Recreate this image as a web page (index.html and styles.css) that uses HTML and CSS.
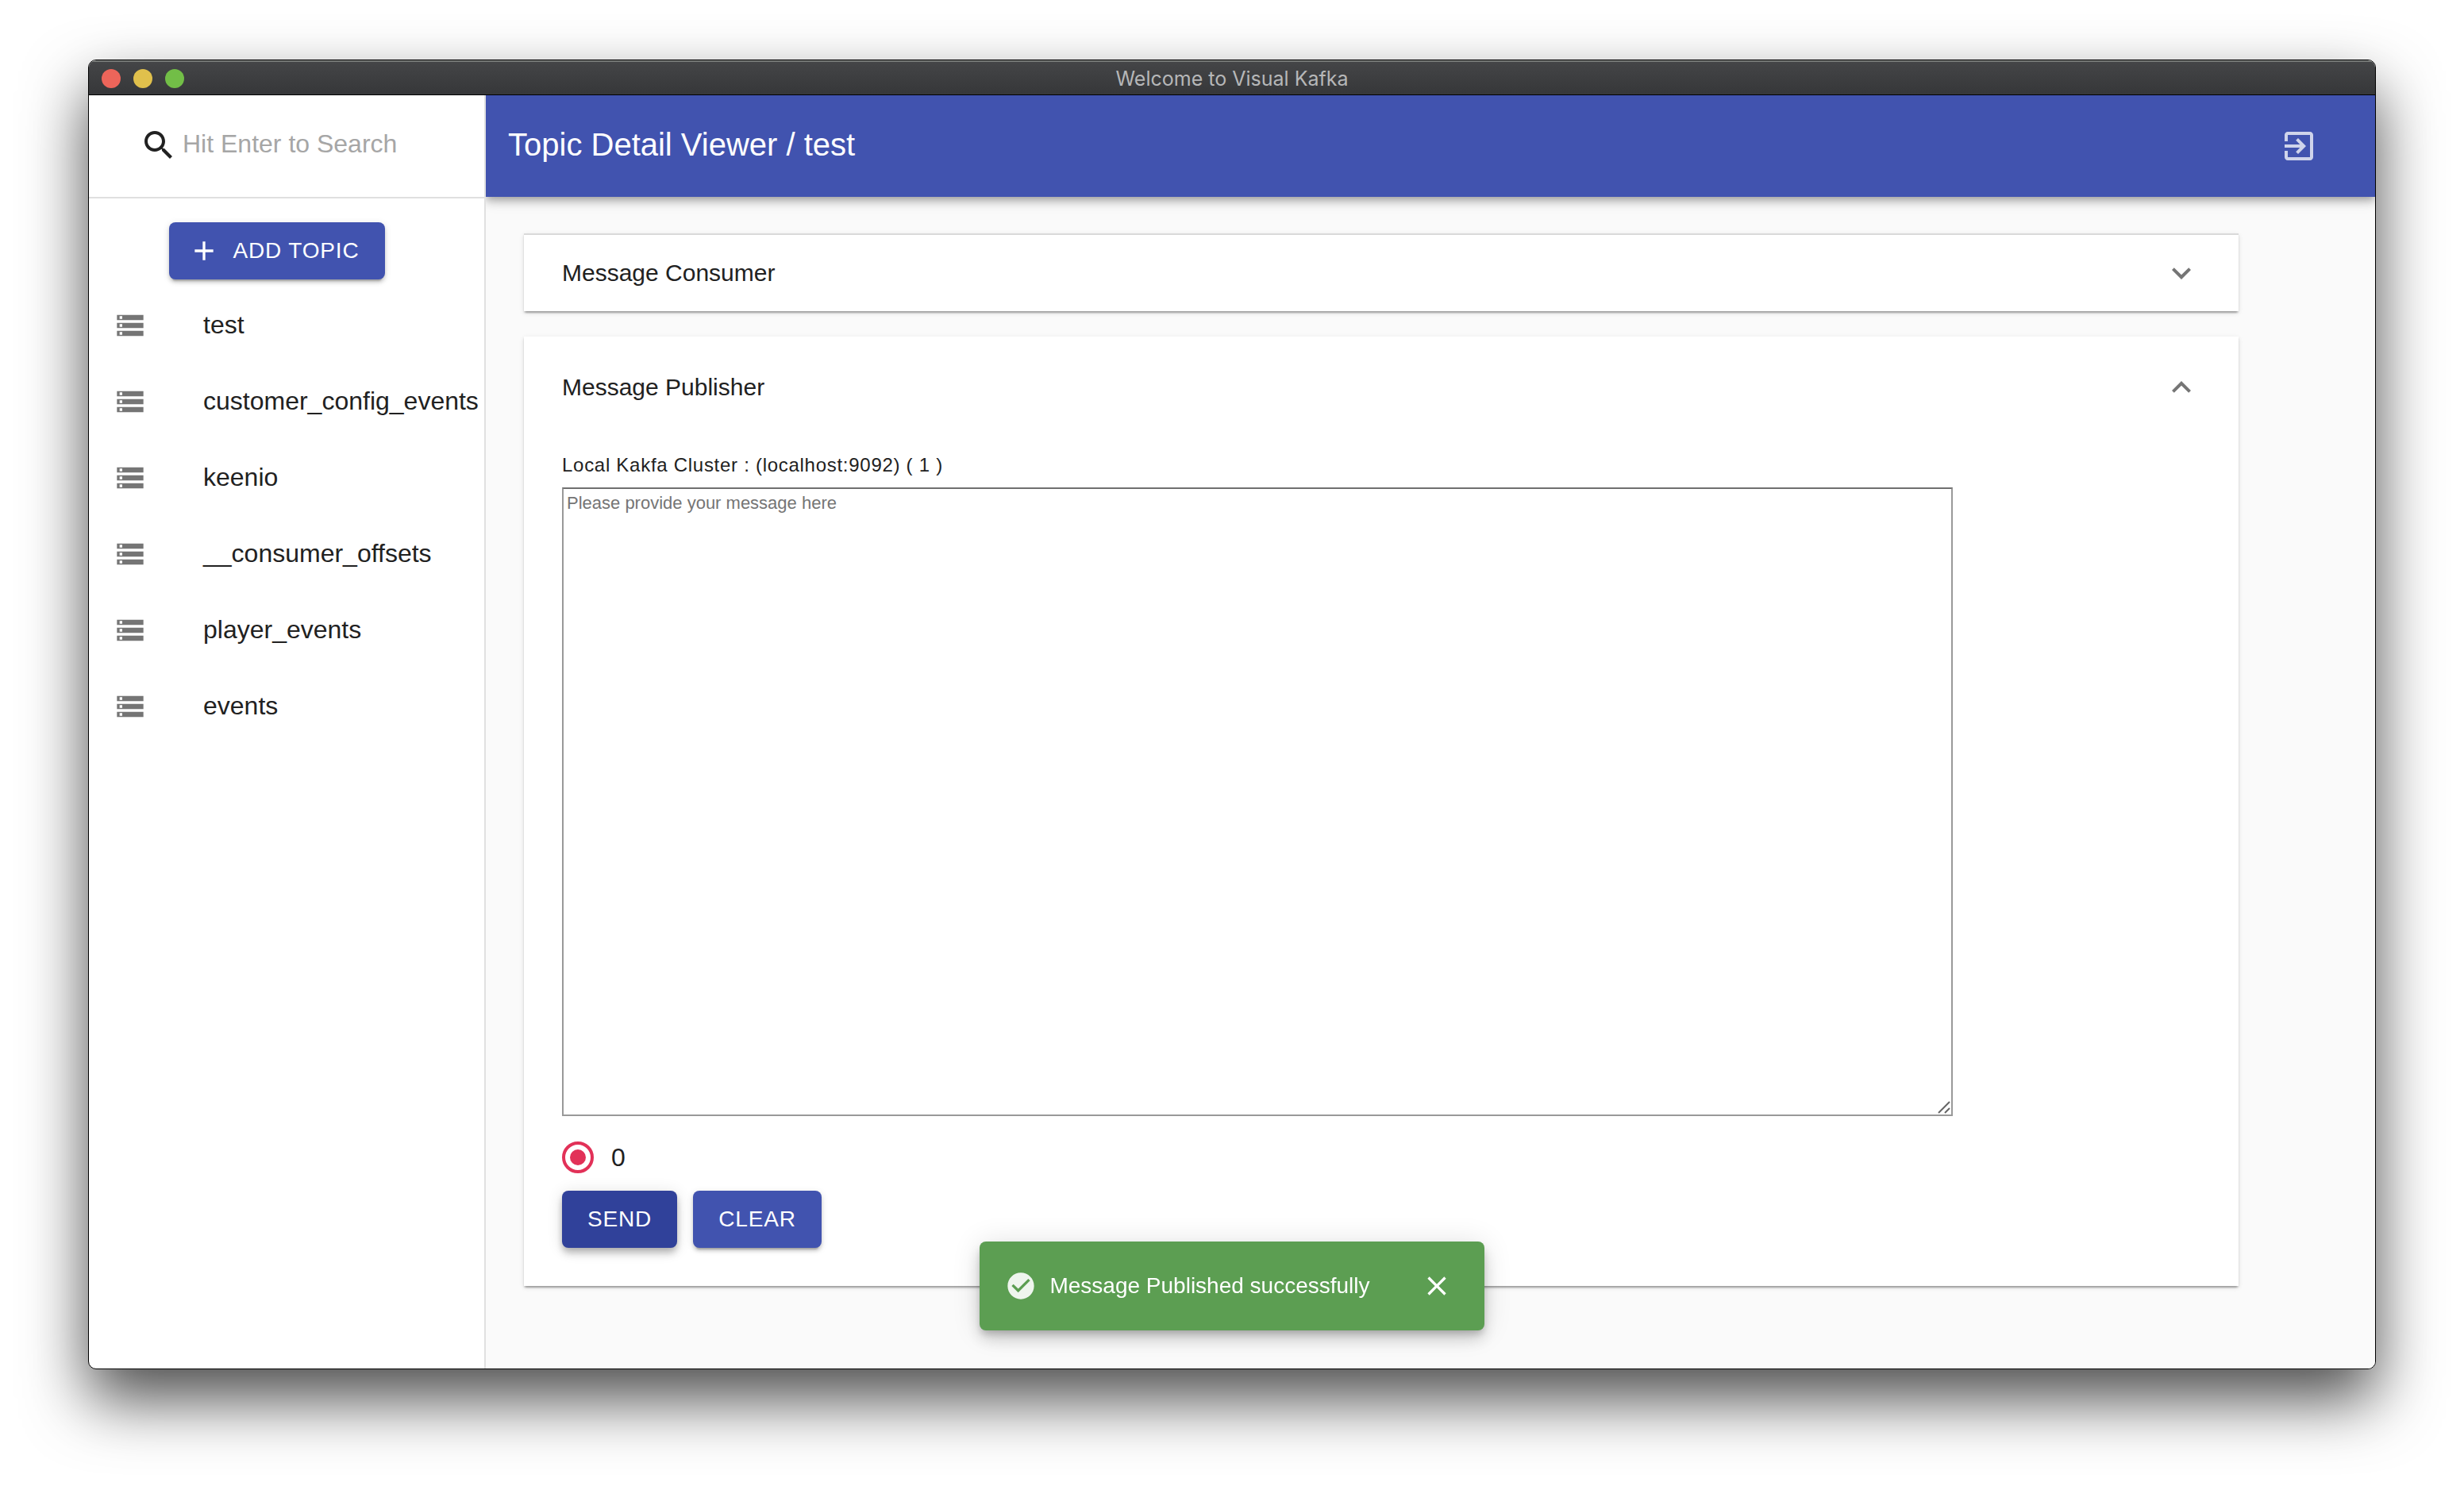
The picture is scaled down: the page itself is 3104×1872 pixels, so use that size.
FILE: index.html
```html
<!DOCTYPE html>
<html lang="en">
<head>
<meta charset="utf-8">
<title>Welcome to Visual Kafka</title>
<link rel="stylesheet" href="styles.css">
</head>
<body>
<svg class="sprite" aria-hidden="true">
  <symbol id="storage" viewBox="0 0 24 24"><path d="M2 20h20v-4H2v4zm2-3h2v2H4v-2zM2 4v4h20V4H2zm4 3H4V5h2v2zm-4 7h20v-4H2v4zm2-3h2v2H4v-2z"/></symbol>
  <symbol id="expand" viewBox="0 0 24 24"><path d="M16.59 8.59L12 13.17 7.41 8.59 6 10l6 6 6-6z"/></symbol>
</svg>
<div class="window">
  <header class="titlebar">
    <div class="lights">
      <button class="light light-close" type="button" aria-label="Close window"></button>
      <button class="light light-min" type="button" aria-label="Minimize window"></button>
      <button class="light light-max" type="button" aria-label="Zoom window"></button>
    </div>
    <span class="window-title">Welcome to Visual Kafka</span>
  </header>
  <div class="body">
    <aside class="sidebar">
      <label class="search">
        <svg class="icon" viewBox="0 0 24 24" aria-hidden="true"><path d="M15.5 14h-.79l-.28-.27C15.41 12.59 16 11.11 16 9.5 16 5.91 13.09 3 9.5 3S3 5.91 3 9.5 5.91 16 9.5 16c1.61 0 3.09-.59 4.23-1.57l.27.28v.79l5 4.99L20.49 19l-4.99-5zm-6 0C7.01 14 5 11.99 5 9.5S7.01 5 9.5 5 14 7.01 14 9.5 11.99 14 9.5 14z"/></svg>
        <input class="search-input" type="text" placeholder="Hit Enter to Search" aria-label="Search topics">
      </label>
      <button class="btn add-topic" type="button">
        <svg class="icon-small" viewBox="0 0 24 24" aria-hidden="true"><path d="M19 13h-6v6h-2v-6H5v-2h6V5h2v6h6v2z"/></svg>
        ADD TOPIC
      </button>
      <nav class="topics">
        <a class="topic" href="#test"><svg class="icon-small"><use href="#storage"/></svg><span class="topic-name">test</span></a>
        <a class="topic" href="#customer_config_events"><svg class="icon-small"><use href="#storage"/></svg><span class="topic-name">customer_config_events</span></a>
        <a class="topic" href="#keenio"><svg class="icon-small"><use href="#storage"/></svg><span class="topic-name">keenio</span></a>
        <a class="topic" href="#__consumer_offsets"><svg class="icon-small"><use href="#storage"/></svg><span class="topic-name">__consumer_offsets</span></a>
        <a class="topic" href="#player_events"><svg class="icon-small"><use href="#storage"/></svg><span class="topic-name">player_events</span></a>
        <a class="topic" href="#events"><svg class="icon-small"><use href="#storage"/></svg><span class="topic-name">events</span></a>
      </nav>
    </aside>
    <main class="main">
      <div class="appbar">
        <h1 class="appbar-title">Topic Detail Viewer / test</h1>
        <button class="icon-btn exit" type="button" aria-label="Exit">
          <svg class="icon" viewBox="0 0 24 24"><path d="M10.09 15.59L11.5 17l5-5-5-5-1.41 1.41L12.67 11H3v2h9.67l-2.58 2.59zM19 3H5c-1.11 0-2 .9-2 2v4h2V5h14v14H5v-4H3v4c0 1.1.89 2 2 2h14c1.1 0 2-.9 2-2V5c0-1.1-.9-2-2-2z"/></svg>
        </button>
      </div>
      <div class="panels">
        <section class="panel panel-collapsed">
          <button class="panel-head" type="button" aria-expanded="false">
            Message Consumer
            <svg class="icon chevron"><use href="#expand"/></svg>
          </button>
        </section>
        <section class="panel">
          <button class="panel-head panel-head-open" type="button" aria-expanded="true">
            Message Publisher
            <svg class="icon chevron chevron-up"><use href="#expand"/></svg>
          </button>
          <form class="publisher">
            <label class="cluster" for="message">Local Kakfa Cluster : (localhost:9092) ( 1 )</label>
            <div class="message-box">
              <textarea class="message" id="message" placeholder="Please provide your message here"></textarea>
              <svg class="grip" viewBox="0 0 18 18" aria-hidden="true"><path d="M2 16L16 2M10 16l6-6"/></svg>
            </div>
            <label class="partition"><input class="radio" type="radio" name="partition" checked>0</label>
            <div class="actions">
              <button class="btn btn-active" type="button">SEND</button>
              <button class="btn" type="button">CLEAR</button>
            </div>
          </form>
        </section>
      </div>
    </main>
  </div>
</div>
<div class="toast-layer">
  <div class="toast" role="status">
    <svg class="icon-small toast-icon" viewBox="0 0 24 24" aria-hidden="true"><path d="M12 2C6.48 2 2 6.48 2 12s4.48 10 10 10 10-4.48 10-10S17.52 2 12 2zm-2 15l-5-5 1.41-1.41L10 14.17l7.59-7.59L19 8l-9 9z"/></svg>
    <span class="toast-text">Message Published successfully</span>
    <button class="icon-btn" type="button" aria-label="Dismiss">
      <svg class="icon-small" viewBox="0 0 24 24"><path d="M19 6.41L17.59 5 12 10.59 6.41 5 5 6.41 10.59 12 5 17.59 6.41 19 12 13.41 17.59 19 19 17.59 13.41 12z"/></svg>
    </button>
  </div>
</div>
</body>
</html>
```
FILE: styles.css
```css
* {
  box-sizing: border-box;
}

body {
  margin: 0;
  min-height: 100vh;
  display: flex;
  padding: 75px 111px 147px;
  background: #fff;
  color: #212121;
  font-family: "Liberation Sans", Arial, sans-serif;
  font-size: 32px;
  line-height: 48px;
}

button,
input,
textarea {
  font: inherit;
  color: inherit;
}

.sprite {
  display: none;
}

.icon,
.icon-small {
  flex: none;
  display: block;
  width: 48px;
  height: 48px;
  fill: currentColor;
}

.icon-small {
  width: 40px;
  height: 40px;
}

.icon-btn {
  display: block;
  border: 0;
  padding: 0;
  background: none;
}

.window {
  flex: 1;
  min-width: 0;
  display: flex;
  flex-direction: column;
  overflow: hidden;
  border: 1px solid #000;
  border-radius: 10px;
  background: #fff;
  box-shadow: 0 38px 80px rgba(0, 0, 0, 0.7);
}

/* Title bar */

.titlebar {
  display: grid;
  grid-template-columns: 1fr auto 1fr;
  align-items: center;
  height: 44px;
  padding: 0 16px;
  border-top: 2px solid #757876;
  border-bottom: 1px solid #000;
  background: linear-gradient(#444547, #363739);
}

.lights {
  display: flex;
  gap: 16px;
}

.light {
  width: 24px;
  height: 24px;
  border: 0;
  border-radius: 50%;
  padding: 0;
}

.light-close {
  background: #ed655a;
}

.light-min {
  background: #e0c04c;
}

.light-max {
  background: #72be47;
}

.window-title {
  color: #b6b7b8;
  font-family: Inter, sans-serif;
  font-size: 25px;
  line-height: 32px;
}

.body {
  flex: 1;
  display: flex;
}

/* Sidebar */

.sidebar {
  flex: none;
  display: flex;
  flex-direction: column;
  width: 500px;
  border-right: 2px solid #e0e0e0;
}

.search {
  display: flex;
  align-items: center;
  gap: 6px;
  height: 130px;
  padding: 0 64px 2px;
  border-bottom: 2px solid #e0e0e0;
}

.search-input {
  flex: 1;
  min-width: 0;
  height: 48px;
  border: 0;
  padding: 0 0 4px;
  outline: 0;
  background: none;
}

.search-input::placeholder {
  color: #a6a6a6;
  opacity: 1;
}

.btn {
  display: flex;
  align-items: center;
  height: 72px;
  border: 0;
  border-radius: 8px;
  padding: 0 32px;
  background: #4153af;
  color: #fff;
  font-size: 28px;
  letter-spacing: 0.03em;
  box-shadow: 0 6px 2px -4px rgba(0, 0, 0, 0.2), 0 4px 4px rgba(0, 0, 0, 0.14), 0 2px 10px rgba(0, 0, 0, 0.12);
}

.btn-active {
  background: #30419a;
  box-shadow: 0 4px 8px -2px rgba(0, 0, 0, 0.2), 0 8px 10px rgba(0, 0, 0, 0.14), 0 2px 20px rgba(0, 0, 0, 0.12);
}

.add-topic {
  gap: 16px;
  align-self: center;
  margin: 30px 24px 10px 0;
  padding: 0 32px 0 24px;
}

.topic {
  display: flex;
  align-items: center;
  gap: 72px;
  height: 96px;
  padding-left: 32px;
  color: #757575;
  text-decoration: none;
}

.topic-name {
  padding-bottom: 2px;
  color: #212121;
}

/* Main area */

.main {
  flex: 1;
  min-width: 0;
  overflow: hidden;
  background: #fafafa;
}

.appbar {
  display: flex;
  align-items: center;
  justify-content: space-between;
  height: 128px;
  padding: 0 72px 0 28px;
  background: #4153af;
  color: #fff;
  box-shadow: 0 4px 8px -2px rgba(0, 0, 0, 0.2), 0 8px 10px rgba(0, 0, 0, 0.14), 0 2px 20px rgba(0, 0, 0, 0.12);
}

.appbar-title {
  margin: 0;
  padding-bottom: 4px;
  font-size: 40px;
  font-weight: 400;
}

.exit {
  color: #cfd4eb;
}

.panels {
  display: flex;
  flex-direction: column;
  gap: 32px;
  padding: 46px 172px 104px 48px;
}

.panel {
  background: #fff;
  box-shadow: 0 4px 2px -2px rgba(0, 0, 0, 0.2), 0 2px 2px rgba(0, 0, 0, 0.14), 0 2px 6px rgba(0, 0, 0, 0.12);
}

.panel-collapsed {
  border-top: 2px solid #d9d9d9;
}

.panel-head {
  display: flex;
  align-items: center;
  justify-content: space-between;
  width: 100%;
  height: 96px;
  border: 0;
  padding: 0 48px;
  background: none;
  font-size: 30px;
  text-align: left;
}

.panel-head-open {
  height: 128px;
}

.chevron {
  color: #757575;
}

.chevron-up {
  transform: rotate(180deg);
}

.publisher {
  display: flex;
  flex-direction: column;
  padding: 14px 48px 48px;
}

.cluster {
  font-size: 24px;
  line-height: 40px;
  letter-spacing: 0.03em;
  margin-bottom: 8px;
}

.message-box {
  position: relative;
  width: 1752px;
  max-width: 100%;
}

.message {
  display: block;
  width: 100%;
  height: 792px;
  border: 2px solid #999;
  border-top-color: #6f6f6f;
  border-radius: 0;
  padding: 4px;
  resize: none;
  outline: 0;
  background: #fff;
  font-size: 22px;
  line-height: 28px;
}

.message::placeholder {
  color: #757575;
  opacity: 1;
}

.grip {
  position: absolute;
  right: 2px;
  bottom: 2px;
  width: 18px;
  height: 18px;
  fill: none;
  stroke: #666;
  stroke-width: 2;
}

.partition {
  display: flex;
  align-items: center;
  gap: 22px;
  height: 84px;
  margin-bottom: 10px;
  padding-top: 20px;
}

.radio {
  appearance: none;
  flex: none;
  width: 40px;
  height: 40px;
  margin: 0;
  border: 4px solid #e23158;
  border-radius: 50%;
  padding: 6px;
  background: #e23158 content-box;
}

.actions {
  display: flex;
  gap: 20px;
}

/* Toast */

.toast-layer {
  position: fixed;
  right: 0;
  bottom: 196px;
  left: 0;
  display: flex;
  justify-content: center;
}

.toast {
  display: flex;
  align-items: center;
  height: 112px;
  border-radius: 8px;
  padding: 0 40px 0 32px;
  background: #5c9e52;
  color: #fff;
  font-size: 28px;
  box-shadow: 0 6px 10px -2px rgba(0, 0, 0, 0.2), 0 12px 20px rgba(0, 0, 0, 0.14), 0 2px 36px rgba(0, 0, 0, 0.12);
}

.toast-icon {
  margin-right: 16px;
  opacity: 0.9;
}

.toast-text {
  margin-right: 64px;
}
```
